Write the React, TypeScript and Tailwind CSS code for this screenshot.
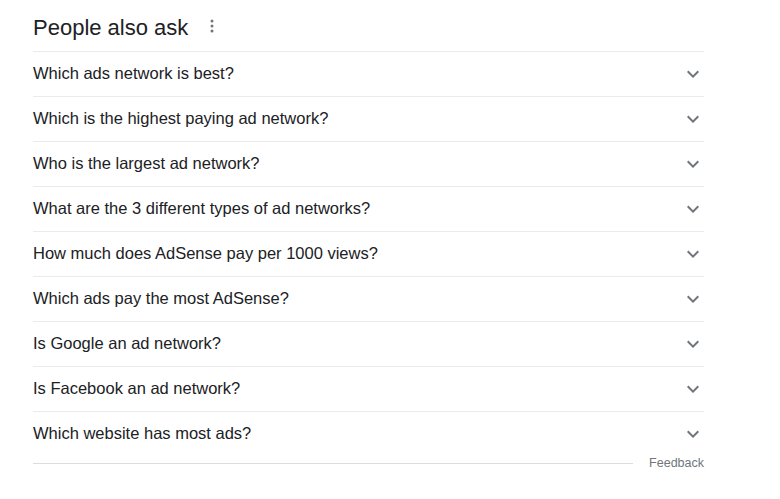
import React from "react";

const questions = [
  "Which ads network is best?",
  "Which is the highest paying ad network?",
  "Who is the largest ad network?",
  "What are the 3 different types of ad networks?",
  "How much does AdSense pay per 1000 views?",
  "Which ads pay the most AdSense?",
  "Is Google an ad network?",
  "Is Facebook an ad network?",
  "Which website has most ads?",
];

function Chevron() {
  return (
    <svg width="24" height="24" viewBox="0 0 24 24" className="text-[#70757a]">
      <path d="M7.41 8.59 12 13.17l4.59-4.58L18 10l-6 6-6-6 1.41-1.41z" fill="currentColor" />
    </svg>
  );
}

export default function App() {
  return (
    <div className="w-[780px] h-[499px] bg-white overflow-hidden" style={{ fontFamily: "Arial, 'Liberation Sans', sans-serif" }}>
      <div className="ml-[33px] w-[671px]">
        <div className="h-[51px] flex items-center pt-[4px]">
          <span className="text-[22px] text-[#202124] leading-none">People also ask</span>
          <svg width="4" height="14" viewBox="0 0 4 14" className="ml-[22px] mt-[-4px]">
            <circle cx="2" cy="2" r="1.5" fill="#70757a" />
            <circle cx="2" cy="7" r="1.5" fill="#70757a" />
            <circle cx="2" cy="12" r="1.5" fill="#70757a" />
          </svg>
        </div>
        {questions.map((q) => (
          <div key={q} className="h-[45px] border-t border-[#ebebeb] flex items-center justify-between">
            <span className="text-[16.5px] text-[#202124] pb-[2px]">{q}</span>
            <div className="mr-[-1px] flex items-center">
              <Chevron />
            </div>
          </div>
        ))}
        <div className="h-[14px] flex items-center pt-[1px]">
          <div className="flex-1 h-px bg-[#dadce0]" />
          <span className="ml-[16px] text-[12.5px] text-[#70757a] leading-none">Feedback</span>
        </div>
      </div>
    </div>
  );
}
